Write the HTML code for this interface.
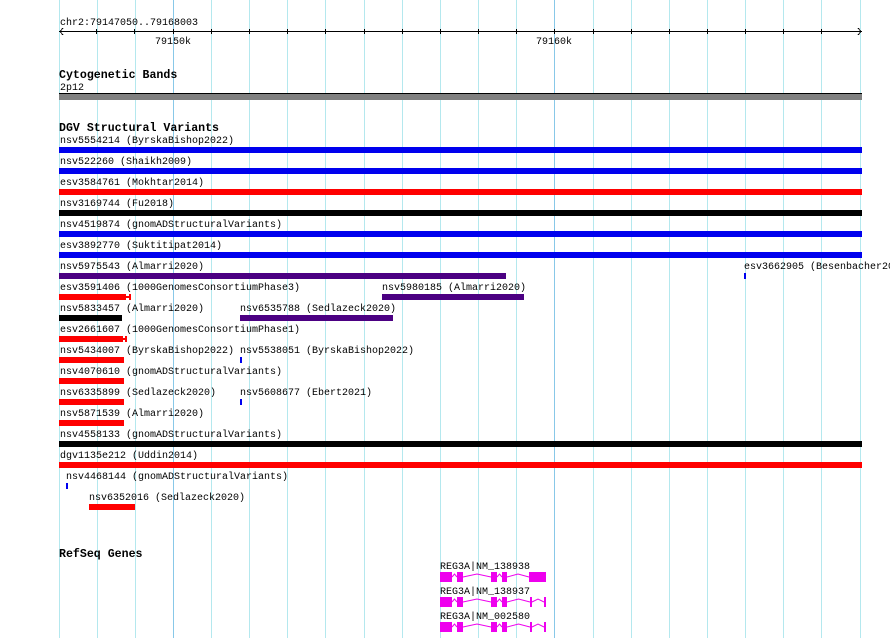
<!DOCTYPE html>
<html><head><meta charset="utf-8"><style>
html,body{margin:0;padding:0;background:#fff;width:890px;height:638px;overflow:hidden}
svg{display:block}
text{font-family:"Liberation Mono",monospace;font-size:10px;fill:#000}
.t{font-weight:bold;font-size:11.6px}
</style></head><body>
<svg width="890" height="638" viewBox="0 0 890 638" xmlns="http://www.w3.org/2000/svg" shape-rendering="crispEdges">
<g stroke="#b4e8ee" stroke-width="1">
<line x1="59.5" y1="0" x2="59.5" y2="638"/><line x1="97.5" y1="0" x2="97.5" y2="638"/><line x1="135.5" y1="0" x2="135.5" y2="638"/>
<line x1="211.5" y1="0" x2="211.5" y2="638"/><line x1="249.5" y1="0" x2="249.5" y2="638"/><line x1="287.5" y1="0" x2="287.5" y2="638"/><line x1="325.5" y1="0" x2="325.5" y2="638"/><line x1="364.5" y1="0" x2="364.5" y2="638"/><line x1="402.5" y1="0" x2="402.5" y2="638"/><line x1="440.5" y1="0" x2="440.5" y2="638"/><line x1="478.5" y1="0" x2="478.5" y2="638"/><line x1="516.5" y1="0" x2="516.5" y2="638"/><line x1="593.5" y1="0" x2="593.5" y2="638"/><line x1="631.5" y1="0" x2="631.5" y2="638"/><line x1="669.5" y1="0" x2="669.5" y2="638"/><line x1="707.5" y1="0" x2="707.5" y2="638"/><line x1="745.5" y1="0" x2="745.5" y2="638"/><line x1="783.5" y1="0" x2="783.5" y2="638"/><line x1="821.5" y1="0" x2="821.5" y2="638"/><line x1="860.5" y1="0" x2="860.5" y2="638"/>
</g>
<g stroke="#88c8e8"><line x1="173.5" y1="0" x2="173.5" y2="638"/><line x1="554.5" y1="0" x2="554.5" y2="638"/></g>
<text x="60" y="25">chr2:79147050..79168003</text>
<g stroke="#000" stroke-width="1">
<line x1="59" y1="31.5" x2="862" y2="31.5"/>
<polyline points="63,28 60,31.5 63,35" fill="none"/>
<polyline points="858,28 861,31.5 858,35" fill="none"/>
<line x1="96.5" y1="29" x2="96.5" y2="34"/><line x1="134.5" y1="29" x2="134.5" y2="34"/><line x1="173.5" y1="29" x2="173.5" y2="34"/><line x1="211.5" y1="29" x2="211.5" y2="34"/><line x1="249.5" y1="29" x2="249.5" y2="34"/><line x1="287.5" y1="29" x2="287.5" y2="34"/><line x1="325.5" y1="29" x2="325.5" y2="34"/><line x1="364.5" y1="29" x2="364.5" y2="34"/><line x1="402.5" y1="29" x2="402.5" y2="34"/><line x1="440.5" y1="29" x2="440.5" y2="34"/><line x1="478.5" y1="29" x2="478.5" y2="34"/><line x1="516.5" y1="29" x2="516.5" y2="34"/><line x1="554.5" y1="29" x2="554.5" y2="34"/><line x1="593.5" y1="29" x2="593.5" y2="34"/><line x1="631.5" y1="29" x2="631.5" y2="34"/><line x1="669.5" y1="29" x2="669.5" y2="34"/><line x1="707.5" y1="29" x2="707.5" y2="34"/><line x1="745.5" y1="29" x2="745.5" y2="34"/><line x1="783.5" y1="29" x2="783.5" y2="34"/><line x1="821.5" y1="29" x2="821.5" y2="34"/>
</g>
<text x="173" y="44" text-anchor="middle">79150k</text>
<text x="554" y="44" text-anchor="middle">79160k</text>
<text class="t" x="59" y="78">Cytogenetic Bands</text>
<text x="60" y="90">2p12</text>
<rect x="59" y="93" width="803" height="7" fill="#808080"/>
<rect x="59" y="93" width="803" height="1" fill="#000"/>
<text class="t" x="59" y="131">DGV Structural Variants</text>
<g>
<text x="60" y="143">nsv5554214 (ByrskaBishop2022)</text><rect x="59" y="147" width="803" height="6" fill="#0000ee"/>
<text x="60" y="164">nsv522260 (Shaikh2009)</text><rect x="59" y="168" width="803" height="6" fill="#0000ee"/>
<text x="60" y="185">esv3584761 (Mokhtar2014)</text><rect x="59" y="189" width="803" height="6" fill="#ff0000"/>
<text x="60" y="206">nsv3169744 (Fu2018)</text><rect x="59" y="210" width="803" height="6" fill="#000"/>
<text x="60" y="227">nsv4519874 (gnomADStructuralVariants)</text><rect x="59" y="231" width="803" height="6" fill="#0000ee"/>
<text x="60" y="248">esv3892770 (Suktitipat2014)</text><rect x="59" y="252" width="803" height="6" fill="#0000ee"/>
<text x="60" y="269">nsv5975543 (Almarri2020)</text><rect x="59" y="273" width="447" height="6" fill="#4b0082"/>
<text x="744" y="269">esv3662905 (Besenbacher2020)</text><rect x="744" y="273" width="2" height="6" fill="#0000ee"/>
<text x="60" y="290">esv3591406 (1000GenomesConsortiumPhase3)</text><rect x="59" y="294" width="67" height="6" fill="#ff0000"/><rect x="126" y="296" width="4" height="2" fill="#ff0000"/><rect x="129" y="294" width="2" height="6" fill="#ff0000"/>
<text x="382" y="290">nsv5980185 (Almarri2020)</text><rect x="382" y="294" width="142" height="6" fill="#4b0082"/>
<text x="60" y="311">nsv5833457 (Almarri2020)</text><rect x="59" y="315" width="63" height="6" fill="#000"/>
<text x="240" y="311">nsv6535788 (Sedlazeck2020)</text><rect x="240" y="315" width="153" height="6" fill="#4b0082"/>
<text x="60" y="332">esv2661607 (1000GenomesConsortiumPhase1)</text><rect x="59" y="336" width="64" height="6" fill="#ff0000"/><rect x="123" y="338" width="3" height="2" fill="#ff0000"/><rect x="125" y="336" width="2" height="6" fill="#ff0000"/>
<text x="60" y="353">nsv5434007 (ByrskaBishop2022)</text><rect x="59" y="357" width="65" height="6" fill="#ff0000"/>
<text x="240" y="353">nsv5538051 (ByrskaBishop2022)</text><rect x="240" y="357" width="2" height="6" fill="#0000ee"/>
<text x="60" y="374">nsv4070610 (gnomADStructuralVariants)</text><rect x="59" y="378" width="65" height="6" fill="#ff0000"/>
<text x="60" y="395">nsv6335899 (Sedlazeck2020)</text><rect x="59" y="399" width="65" height="6" fill="#ff0000"/>
<text x="240" y="395">nsv5608677 (Ebert2021)</text><rect x="240" y="399" width="2" height="6" fill="#0000ee"/>
<text x="60" y="416">nsv5871539 (Almarri2020)</text><rect x="59" y="420" width="65" height="6" fill="#ff0000"/>
<text x="60" y="437">nsv4558133 (gnomADStructuralVariants)</text><rect x="59" y="441" width="803" height="6" fill="#000"/>
<text x="60" y="458">dgv1135e212 (Uddin2014)</text><rect x="59" y="462" width="803" height="6" fill="#ff0000"/>
<text x="66" y="479">nsv4468144 (gnomADStructuralVariants)</text><rect x="66" y="483" width="2" height="6" fill="#0000ee"/>
<text x="89" y="500">nsv6352016 (Sedlazeck2020)</text><rect x="89" y="504" width="46" height="6" fill="#ff0000"/>
</g>
<text class="t" x="59" y="557">RefSeq Genes</text>
<text x="440" y="569">REG3A|NM_138938</text>
<text x="440" y="594">REG3A|NM_138937</text>
<text x="440" y="619">REG3A|NM_002580</text>
<g fill="#ee00ee" stroke="none">
<rect x="440" y="572" width="12" height="10"/><rect x="457" y="572" width="6" height="10"/><rect x="491" y="572" width="6" height="10"/><rect x="502" y="572" width="5" height="10"/><rect x="529" y="572" width="17" height="10"/>
<rect x="440" y="597" width="12" height="10"/><rect x="457" y="597" width="6" height="10"/><rect x="491" y="597" width="6" height="10"/><rect x="502" y="597" width="5" height="10"/><rect x="530" y="597" width="2" height="10"/><rect x="544" y="597" width="2" height="10"/>
<rect x="440" y="622" width="12" height="10"/><rect x="457" y="622" width="6" height="10"/><rect x="491" y="622" width="6" height="10"/><rect x="502" y="622" width="5" height="10"/><rect x="530" y="622" width="2" height="10"/><rect x="544" y="622" width="2" height="10"/>
</g>
<g fill="none" stroke="#ee00ee" stroke-width="1" shape-rendering="auto">
<polyline points="452,577 454.5,574 457,577"/><polyline points="463,577 477,574 491,577"/><polyline points="497,577 499.5,574 502,577"/><polyline points="507,577 518,574 529,577"/>
<polyline points="452,602 454.5,599 457,602"/><polyline points="463,602 477,599 491,602"/><polyline points="497,602 499.5,599 502,602"/><polyline points="507,602 518.5,599 530,602"/><polyline points="532,602 538,599 544,602"/>
<polyline points="452,627 454.5,624 457,627"/><polyline points="463,627 477,624 491,627"/><polyline points="497,627 499.5,624 502,627"/><polyline points="507,627 518.5,624 530,627"/><polyline points="532,627 538,624 544,627"/>
</g>
</svg>
</body></html>
